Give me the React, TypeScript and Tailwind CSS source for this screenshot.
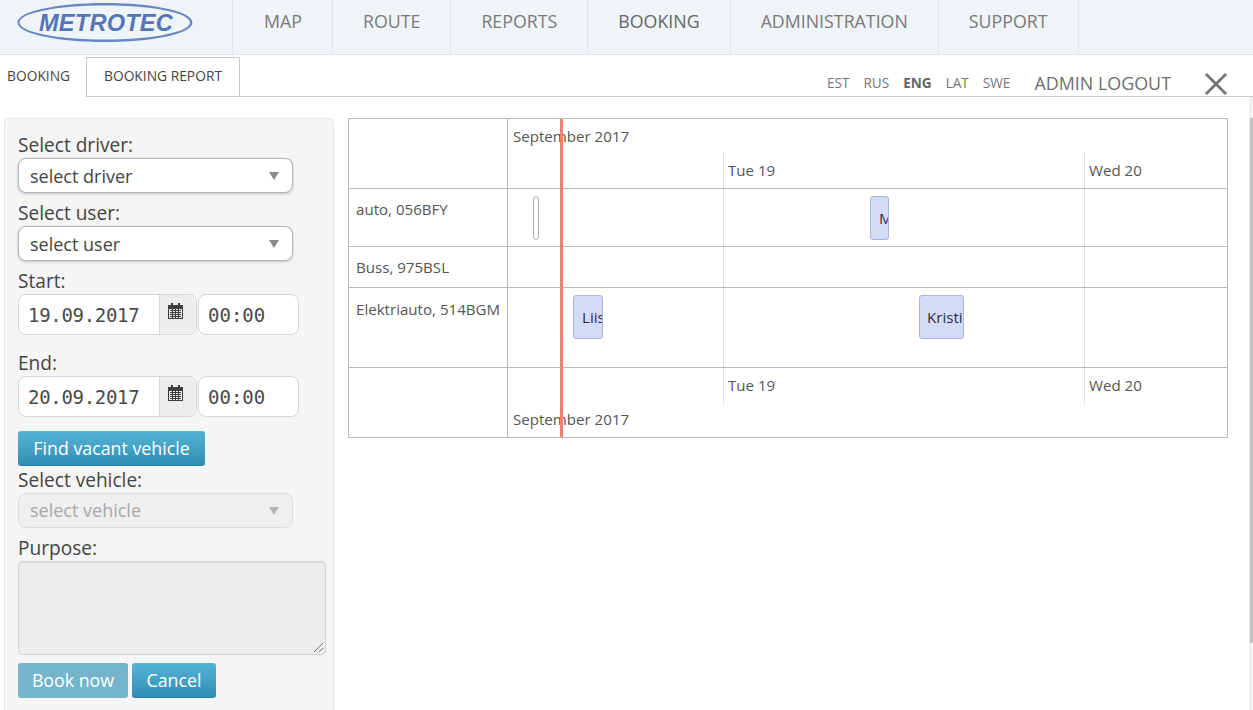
import React from 'react';

const navItems = ['MAP', 'ROUTE', 'REPORTS', 'BOOKING', 'ADMINISTRATION', 'SUPPORT'];
const langs = ['EST', 'RUS', 'ENG', 'LAT', 'SWE'];

const Logo = () => (
  <svg width="178" height="44" viewBox="0 0 178 44" className="block">
    <path
      fillRule="evenodd"
      fill="#6686c4"
      d="M1.5 22.5C1.5 11.5 40 3 89 3s87.5 8.5 87.5 19.5S138 42 89 42 1.5 33.5 1.5 22.5zM3.5 22.5C3.5 32 41 39.5 89 39.5s85-7.5 85-17S137 5.5 89 5.5 3.5 13 3.5 22.5z"
    />
    <text x="90" y="31" textAnchor="middle" fontFamily="'Liberation Sans', sans-serif" fontWeight="700" fontStyle="italic" fontSize="23.6" fill="#5674b9" letterSpacing="0.2">METROTEC</text>
  </svg>
);

const CalendarGlyph = () => (
  <svg width="15" height="16" viewBox="0 0 15 16" fill="#3d3d3d">
    <rect x="3" y="0" width="2" height="3" />
    <rect x="10" y="0" width="2" height="3" />
    <path d="M0 2h15v14H0zM1 6v9h13V6z" fillRule="evenodd" />
    <path d="M2 7h11v1H2zM2 9h11v1H2zM2 11h11v1H2zM2 13h11v1H2z" />
    <path d="M4 6h1v9H4zM7 6h1v9H7zM10 6h1v9h-1z" />
  </svg>
);

const Select = ({ text, disabled }: { text: string; disabled?: boolean }) => (
  <div
    className={`flex h-[35px] w-[275px] items-center justify-between rounded-lg border pl-[11px] pr-[13px] text-[18px] ${
      disabled
        ? 'border-[#dcdcdc] bg-[#efefef] text-[#a8a8a8]'
        : 'border-[#b4b4b4] bg-white text-[#444] shadow-[0_1px_3px_rgba(0,0,0,0.2)]'
    }`}
  >
    <span className={disabled ? '' : 'pt-[2px]'}>{text}</span>
    <span className={`h-0 w-0 border-x-[5px] border-t-[8px] border-x-transparent ${disabled ? 'border-t-[#b5b5b5]' : 'border-t-[#8a8a8a]'}`} />
  </div>
);

const DateTime = ({ date }: { date: string }) => (
  <div className="flex h-[41px] gap-px">
    <div className="flex w-[179px] rounded-lg border border-[#d6d6d6] bg-white">
      <div className="flex-1 pl-[9px] font-['DejaVu_Sans_Mono',monospace] text-[19px] leading-[41px] tracking-[-0.3px] text-[#4a4a4a]">{date}</div>
      <div className="flex w-[37px] justify-start rounded-r-lg border-l border-[#d6d6d6] bg-[#eee] pl-[8px] pt-[8px]">
        <CalendarGlyph />
      </div>
    </div>
    <div className="w-[101px] rounded-lg border border-[#d6d6d6] bg-white pl-[9px] font-['DejaVu_Sans_Mono',monospace] text-[19px] leading-[41px] text-[#4a4a4a]">00:00</div>
  </div>
);

const Btn = ({ children, faded, w }: { children: React.ReactNode; faded?: boolean; w: string }) => (
  <button
    className={`h-[35px] rounded-[3px] text-[17.8px] text-white ${w} ${
      faded ? 'bg-[#74b5cc]' : 'border-b border-[#2b7f9f] bg-gradient-to-b from-[#54b4d6] to-[#2f8fb3]'
    }`}
  >
    {children}
  </button>
);

const Label = ({ children }: { children: React.ReactNode }) => (
  <div className="text-[19.1px] leading-[26px] text-[#444]">{children}</div>
);

const Booking = ({ cls, text }: { cls: string; text?: string }) => (
  <div className={`absolute flex items-center overflow-hidden whitespace-nowrap rounded-[3px] border text-[15.1px] ${cls}`}>
    {text && <span className="text-[#2c2c4a]">{text}</span>}
  </div>
);

const DayCells = () => (
  <>
    <div className="w-[216px] border-r border-[#e2e2e2]" />
    <div className="w-[361px] border-r border-[#e2e2e2]" />
    <div className="flex-1" />
  </>
);

export default function App() {
  return (
    <div className="relative h-[710px] w-[1253px] overflow-hidden bg-white font-['Open_Sans',sans-serif]">
      {/* top nav */}
      <div className="flex h-[55px] border-b border-[#dfe3e7] bg-[#eff4f8]">
        <div className="w-[232px] pl-[16px]">
          <Logo />
        </div>
        <div className="flex">
          {navItems.map((item) => (
            <div
              key={item}
              className={`flex h-[54px] items-center border-l border-[#e2e6ea] pb-[12px] pr-[30px] text-[17.8px] ${
                item === 'BOOKING' ? 'font-medium text-[#666]' : 'text-[#7a7a7a]'
              } ${item === 'SUPPORT' ? 'border-r' : ''} ${item === 'MAP' ? 'pl-[31px]' : 'pl-[30px]'}`}
            >
              {item}
            </div>
          ))}
        </div>
      </div>

      {/* tabs row */}
      <div className="flex h-[42px] items-end justify-between border-b border-[#c8c8c8]">
        <div className="flex h-[39px]">
          <div className="-mb-px flex h-[40px] w-[87px] items-center border-r border-[#c8c8c8] bg-white pb-[1px] pl-[7px] text-[13.8px] text-[#444]">BOOKING</div>
          <div className="flex w-[153px] items-center justify-center border-r border-t border-[#c8c8c8] pb-[1px] text-[13.8px] text-[#444]">BOOKING REPORT</div>
        </div>
        <div className="flex h-[30px] items-start pr-[26px]">
          <div className="mt-[4px] flex items-center">
            <div className="flex gap-[14px] text-[13.6px] text-[#777]">
              {langs.map((l) => (
                <span key={l} className={l === 'ENG' ? 'font-bold text-[#666]' : ''}>{l}</span>
              ))}
            </div>
            <span className="ml-[24px] text-[17.9px] text-[#6f6f6f]">ADMIN LOGOUT</span>
          </div>
          <svg width="22" height="22" viewBox="0 0 22 22" className="ml-[34px] mt-[7px]" stroke="#777" strokeWidth="3">
            <path d="M1 1L21 21M21 1L1 21" />
          </svg>
        </div>
      </div>

      {/* body */}
      <div className="flex items-start pl-[4px] pt-[21px]">
        <div className="h-[620px] w-[330px] shrink-0 rounded-[4px] border border-[#e6e6e6] bg-[#f5f5f5] pl-[13px] pt-[13px]">
          <Label>Select driver:</Label>
          <Select text="select driver" />
          <div className="mt-[7px]"><Label>Select user:</Label></div>
          <Select text="select user" />
          <div className="mt-[7px]"><Label>Start:</Label></div>
          <DateTime date="19.09.2017" />
          <div className="mt-[15px]"><Label>End:</Label></div>
          <DateTime date="20.09.2017" />
          <div className="mt-[14px]"><Btn w="w-[187px]">Find vacant vehicle</Btn></div>
          <div className="mt-[1px]"><Label>Select vehicle:</Label></div>
          <Select text="select vehicle" disabled />
          <div className="mt-[7px]"><Label>Purpose:</Label></div>
          <div className="relative h-[94px] w-[308px] rounded-[4px] border border-[#d4d4d4] bg-[#eee] shadow-[inset_0_1px_2px_rgba(0,0,0,0.08)]">
            <svg width="11" height="11" viewBox="0 0 11 11" className="absolute bottom-[1px] right-[1px]" stroke="#777">
              <path d="M1 10L10 1M6 10L10 6" />
            </svg>
          </div>
          <div className="mt-[8px] flex gap-[4px]">
            <Btn w="w-[110px]" faded>Book now</Btn>
            <Btn w="w-[84px]">Cancel</Btn>
          </div>
        </div>

        {/* timeline */}
        <div className="relative ml-[14px] w-[880px] border border-[#b9b9b9] text-[15.1px] text-[#555]">
          <div className="flex h-[70px] border-b border-[#b9b9b9]">
            <div className="w-[159px] border-r border-[#b9b9b9]" />
            <div className="flex flex-1 flex-col">
              <div className="h-[33px] pl-[5px] pt-[7px] leading-[20px]">September 2017</div>
              <div className="flex flex-1 leading-[20px]">
                <div className="w-[216px] border-r border-[#e2e2e2]" />
                <div className="w-[361px] border-r border-[#e2e2e2] pl-[4px] pt-[8px]">Tue 19</div>
                <div className="flex-1 pl-[4px] pt-[8px]">Wed 20</div>
              </div>
            </div>
          </div>

          <div className="flex h-[58px] border-b border-[#b9b9b9]">
            <div className="w-[159px] border-r border-[#b9b9b9] pl-[7px] pt-[10px] leading-[20px]">auto, 056BFY</div>
            <div className="relative flex flex-1">
              <DayCells />
              <Booking cls="left-[25px] top-[7px] h-[44px] w-[6px] rounded-[4px] border-[#b0b0b0] bg-white" />
              <Booking cls="left-[362px] top-[7px] h-[44px] w-[19px] border-[#a9b4e0] bg-[#d3dbf7] pl-[8px]" text="M" />
            </div>
          </div>

          <div className="flex h-[41px] border-b border-[#b9b9b9]">
            <div className="w-[159px] border-r border-[#b9b9b9] pl-[7px] pt-[10px] leading-[20px]">Buss, 975BSL</div>
            <div className="flex flex-1"><DayCells /></div>
          </div>

          <div className="flex h-[80px] border-b border-[#b9b9b9]">
            <div className="w-[159px] border-r border-[#b9b9b9] pl-[7px] pt-[11px] leading-[20px] whitespace-nowrap">Elektriauto, 514BGM</div>
            <div className="relative flex flex-1">
              <DayCells />
              <Booking cls="left-[65px] top-[7px] h-[44px] w-[30px] border-[#a9b4e0] bg-[#d3dbf7] pl-[8px]" text="Liisa" />
              <Booking cls="left-[411px] top-[7px] h-[44px] w-[45px] border-[#a9b4e0] bg-[#d3dbf7] pl-[7px]" text="Kristi" />
            </div>
          </div>

          <div className="flex h-[69px]">
            <div className="w-[159px] border-r border-[#b9b9b9]" />
            <div className="flex flex-1 flex-col">
              <div className="flex h-[36px] leading-[20px]">
                <div className="w-[216px] border-r border-[#e2e2e2]" />
                <div className="w-[361px] border-r border-[#e2e2e2] pl-[4px] pt-[7px]">Tue 19</div>
                <div className="flex-1 pl-[4px] pt-[7px]">Wed 20</div>
              </div>
              <div className="pl-[5px] pt-[5px] leading-[20px]">September 2017</div>
            </div>
          </div>

          {/* now marker */}
          <div className="absolute bottom-0 left-[211px] top-0 w-[3px] bg-[#f08072]" />
        </div>
      </div>

      {/* scrollbar */}
      <div className="absolute bottom-0 right-0 top-[97px] w-[4px] bg-[#f1f1f1]">
        <div className="ml-[1px] mt-[21px] h-[525px] w-[3px] bg-[#c1c1c1]" />
      </div>
    </div>
  );
}
